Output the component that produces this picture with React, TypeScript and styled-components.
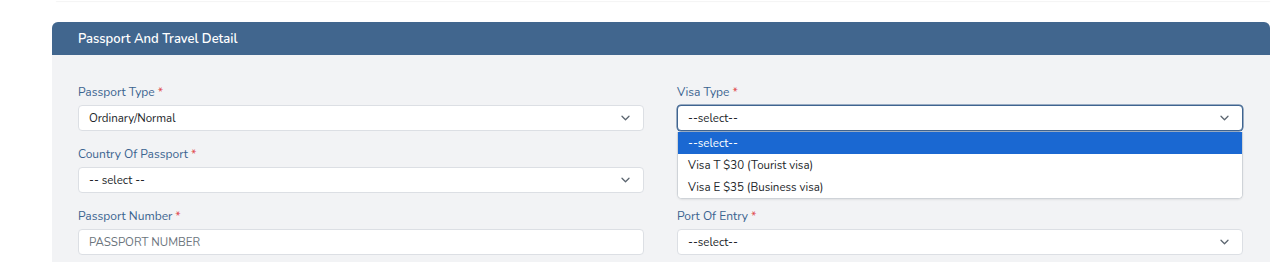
import * as React from "react";
import styled, { createGlobalStyle } from "styled-components";

const GlobalStyle = createGlobalStyle`
	* {
		box-sizing: border-box;
	}
	body {
		margin: 0;
		background: #ffffff;
		font-family: "Nunito", "Open Sans", "Noto Sans", sans-serif;
	}
`;

const StyledPage = styled.div`
	padding: 0 10px 0 52px;
	height: 262px;
	overflow: hidden;
`;

const StyledPrevEdge = styled.div`
	height: 1px;
	background: #ffffff;
	box-shadow: 0 1px 1px rgba(0, 0, 0, 0.05);
	margin-left: 4px;
`;

const StyledCard = styled.div`
	margin-top: 21px;
	background: #f2f3f5;
	border-radius: 6px 6px 0 0;
`;

const StyledHeader = styled.div`
	height: 33px;
	display: flex;
	align-items: center;
	padding-left: 26px;
	background: #41668e;
	border-radius: 6px 6px 0 0;
	color: #ffffff;
	font-size: 13px;
	font-weight: 600;
`;

const StyledBody = styled.div`
	display: grid;
	grid-template-columns: 566px 566px;
	column-gap: 33px;
	row-gap: 15px;
	padding: 29px 27px 20px 26px;
`;

const StyledField = styled.div`
	position: relative;
	display: flex;
	flex-direction: column;
`;

const StyledLabel = styled.label`
	height: 16px;
	line-height: 16px;
	margin-bottom: 5px;
	font-size: 12px;
	color: #3b6390;
`;

const StyledRequired = styled.span`
	color: #e0474c;
	margin-left: 3px;
`;

const StyledControl = styled.div<{ $focused?: boolean }>`
	height: 26px;
	display: flex;
	align-items: center;
	justify-content: space-between;
	padding: 0 13px 0 10px;
	background: #ffffff;
	border: 1px solid ${(p) => (p.$focused ? "#3f6490" : "#dcdfe4")};
	box-shadow: ${(p) => (p.$focused ? "0 0 0 0.5px #3f6490" : "none")};
	border-radius: 4px;
	font-size: 11.5px;
	color: #212529;
`;

const StyledPlaceholder = styled.span`
	color: #6c757d;
`;

const StyledMenu = styled.ul`
	position: absolute;
	top: calc(100% + 1px);
	left: 0;
	right: 0;
	margin: 0;
	padding: 0;
	list-style: none;
	background: #ffffff;
	border: 1px solid #cfd3d8;
	border-top: none;
	border-radius: 0 0 5px 5px;
	overflow: hidden;
	box-shadow: 0 1px 2px rgba(0, 0, 0, 0.08);
	z-index: 2;
`;

const StyledOption = styled.li<{ $active?: boolean }>`
	height: 22px;
	line-height: 22px;
	padding-left: 10px;
	font-size: 11.5px;
	background: ${(p) => (p.$active ? "#1a68d2" : "#ffffff")};
	color: ${(p) => (p.$active ? "#ffffff" : "#212529")};
`;

const Chevron: React.FC = () => (
	<svg width="9" height="6" viewBox="0 0 9 6" fill="none">
		<path d="M1 1.2l3.5 3.5 3.5-3.5" stroke="#5c6670" strokeWidth="1.3" strokeLinecap="round" strokeLinejoin="round" />
	</svg>
);

type FieldProps = {
	label: string;
	value: string;
	select?: boolean;
	placeholder?: boolean;
	focused?: boolean;
	options?: string[];
};

const Field: React.FC<FieldProps> = ({ label, value, select, placeholder, focused, options }) => (
	<StyledField>
		<StyledLabel>
			{label}
			<StyledRequired>*</StyledRequired>
		</StyledLabel>
		<StyledControl $focused={focused}>
			{placeholder ? <StyledPlaceholder>{value}</StyledPlaceholder> : <span>{value}</span>}
			{select && <Chevron />}
		</StyledControl>
		{options && (
			<StyledMenu>
				{options.map((o, i) => (
					<StyledOption key={o} $active={i === 0}>
						{o}
					</StyledOption>
				))}
			</StyledMenu>
		)}
	</StyledField>
);

const App: React.FC = () => {
	return (
		<>
			<GlobalStyle />
			<StyledPage>
				<StyledPrevEdge />
				<StyledCard>
					<StyledHeader>Passport And Travel Detail</StyledHeader>
					<StyledBody>
						<Field label="Passport Type" value="Ordinary/Normal" select />
						<Field
							label="Visa Type"
							value="--select--"
							select
							focused
							options={["--select--", "Visa T $30 (Tourist visa)", "Visa E $35 (Business visa)"]}
						/>
						<Field label="Country Of Passport" value="-- select --" select />
						<div />
						<Field label="Passport Number" value="PASSPORT NUMBER" placeholder />
						<Field label="Port Of Entry" value="--select--" select />
					</StyledBody>
				</StyledCard>
			</StyledPage>
		</>
	);
};

export default App;
